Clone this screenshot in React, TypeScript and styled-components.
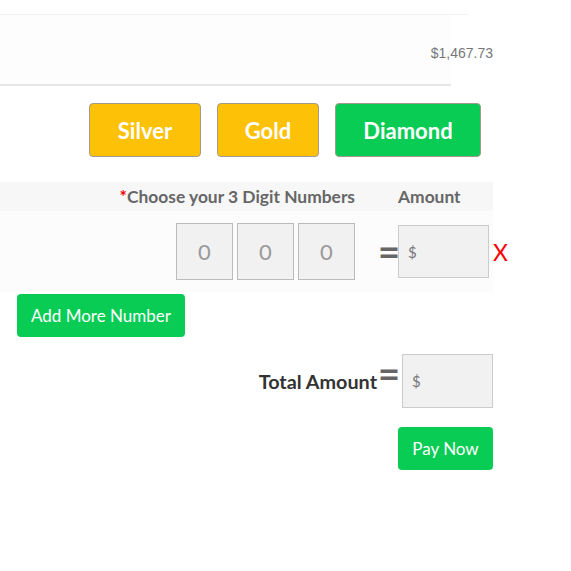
import React from "react";
import styled, { createGlobalStyle } from "styled-components";

const Global = createGlobalStyle`
  body { margin: 0; background: #fff; font-family: Lato, "Open Sans", sans-serif; }
`;

const Page = styled.div`
  width: 493px;
  padding-top: 14px;
`;

const TopRule = styled.div`
  width: 468px;
  height: 1px;
  background: #f2f2f2;
`;

const Summary = styled.div`
  height: 69px;
  display: flex;
  align-items: center;
  justify-content: flex-end;
  background: linear-gradient(to right, #fdfdfd 451px, #fff 451px);
`;

const Balance = styled.span`
  font-family: "Liberation Sans", Arial, sans-serif;
  font-size: 14px;
  color: #777;
  margin-top: 6px;
`;

const BottomRule = styled.div`
  width: 451px;
  height: 2px;
  background: #e6e6e6;
`;

const TierRow = styled.div`
  display: flex;
  justify-content: flex-end;
  gap: 16px;
  padding-right: 12px;
  margin-top: 17px;
`;

const TierButton = styled.button<{ $tone: "gold" | "green"; $w: number }>`
  width: ${(p) => p.$w}px;
  height: 54px;
  border: 1px solid #a39a8a;
  border-radius: 4px;
  background: ${(p) => (p.$tone === "gold" ? "#fdc107" : "#09cc55")};
  color: #fff;
  font-family: inherit;
  font-size: 22px;
  font-weight: 700;
  cursor: pointer;
`;

const HeaderRow = styled.div`
  margin-top: 25px;
  height: 29px;
  background: #f7f7f7;
  display: flex;
  align-items: center;
  justify-content: flex-end;
  font-size: 17.4px;
  font-weight: 700;
  color: #666;
`;

const HeaderLabel = styled.span`
  margin-right: 43px;
`;

const Required = styled.span`
  color: #e00;
`;

const AmountHead = styled.span`
  width: 95px;
`;

const EntryRow = styled.div`
  background: #fcfcfc;
  display: flex;
  align-items: center;
  justify-content: flex-end;
  padding: 12px 4px 12px 0;
  height: 57px;
`;

const Digits = styled.div`
  display: flex;
  gap: 4px;
`;

const DigitBox = styled.div`
  width: 55px;
  height: 55px;
  border: 1px solid #bbb;
  background: #f1f1f1;
  display: flex;
  align-items: center;
  justify-content: center;
  font-size: 22px;
  color: #999;
`;

const Equals = styled.span<{ $lift?: number }>`
  font-size: 38px;
  font-weight: 700;
  line-height: 1;
  color: #666;
  width: 16px;
  display: flex;
  justify-content: center;
  position: relative;
  top: ${(p) => p.$lift ?? 0}px;
`;

const MoneyInput = styled.div<{ $h: number }>`
  width: 91px;
  height: ${(p) => p.$h}px;
  border: 1px solid #ccc;
  background: #f1f1f1;
  display: flex;
  align-items: center;
  padding-left: 9px;
  box-sizing: border-box;
  font-size: 15px;
  color: #777;
`;

const Remove = styled.span`
  color: #f00;
  font-size: 23px;
  margin-left: 4px;
  margin-right: -17px;
  width: 13px;
`;

const GreenButton = styled.button`
  height: 43px;
  border: none;
  border-radius: 4px;
  background: #09cc55;
  color: #fff;
  font-family: inherit;
  font-size: 17px;
  padding: 0 14px;
  white-space: nowrap;
  cursor: pointer;
`;

const AddRow = styled.div`
  margin-top: 2px;
  padding-left: 17px;
`;

const TotalRow = styled.div`
  margin-top: 17px;
  display: flex;
  align-items: center;
  justify-content: flex-end;
`;

const TotalLabel = styled.span`
  font-size: 19.8px;
  font-weight: 700;
  color: #333;
  margin-right: 4px;
`;

const PayRow = styled.div`
  margin-top: 19px;
  display: flex;
  justify-content: flex-end;
`;

export default function App() {
  return (
    <>
      <Global />
      <Page>
        <TopRule />
        <Summary>
          <Balance>$1,467.73</Balance>
        </Summary>
        <BottomRule />
        <TierRow>
          <TierButton $tone="gold" $w={112}>Silver</TierButton>
          <TierButton $tone="gold" $w={102}>Gold</TierButton>
          <TierButton $tone="green" $w={146}>Diamond</TierButton>
        </TierRow>
        <HeaderRow>
          <HeaderLabel>
            <Required>*</Required>Choose your 3 Digit Numbers
          </HeaderLabel>
          <AmountHead>Amount</AmountHead>
        </HeaderRow>
        <EntryRow>
          <Digits>
            <DigitBox>0</DigitBox>
            <DigitBox>0</DigitBox>
            <DigitBox>0</DigitBox>
          </Digits>
          <Equals $lift={-1} style={{ marginLeft: 26, marginRight: 1 }}>=</Equals>
          <MoneyInput $h={53}>$</MoneyInput>
          <Remove>X</Remove>
        </EntryRow>
        <AddRow>
          <GreenButton>Add More Number</GreenButton>
        </AddRow>
        <TotalRow>
          <TotalLabel>Total Amount</TotalLabel>
          <Equals $lift={-8}>=</Equals>
          <MoneyInput $h={54} style={{ marginLeft: 5 }}>$</MoneyInput>
        </TotalRow>
        <PayRow>
          <GreenButton style={{ width: 95, padding: 0 }}>Pay Now</GreenButton>
        </PayRow>
      </Page>
    </>
  );
}
